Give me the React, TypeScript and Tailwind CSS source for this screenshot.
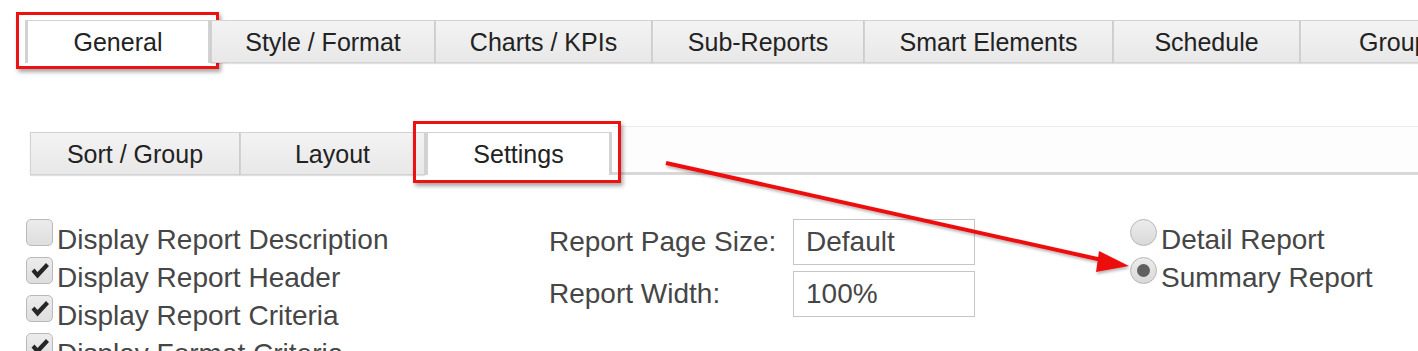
import React from "react"

const topTabs = [
  { label: "General", w: "w-[186px]", active: true },
  { label: "Style / Format", w: "w-[224px]" },
  { label: "Charts / KPIs", w: "w-[217px]" },
  { label: "Sub-Reports", w: "w-[212px]" },
  { label: "Smart Elements", w: "w-[249px]" },
  { label: "Schedule", w: "w-[187px]" },
  { label: "Groups", w: "w-[200px]" },
]

const subTabs = [
  { label: "Sort / Group", w: "w-[210px]" },
  { label: "Layout", w: "w-[185px]" },
  { label: "Settings", w: "w-[187px]", active: true },
]

const checks = [
  { label: "Display Report Description", on: false },
  { label: "Display Report Header", on: true },
  { label: "Display Report Criteria", on: true },
  { label: "Display Format Criteria", on: true },
]

function RedBox({ className }: { className: string }) {
  return (
    <div
      className={`pointer-events-none absolute border-[3px] border-[#ee1111] shadow-[2px_3px_4px_rgba(0,0,0,0.35)] ${className}`}
    />
  )
}

function Tab({ label, w, active, big }: { label: string; w: string; active?: boolean; big?: boolean }) {
  return (
    <div
      className={`relative flex h-[43px] shrink-0 items-center justify-center border border-[#d2d2d2] pt-[2px] text-[25px] text-[#222] ${w} ${
        active
          ? "border-x-[3px] border-b-0 bg-white"
          : "bg-gradient-to-b from-[#f3f3f3] to-[#e8e8e8] shadow-[0_1px_1px_rgba(0,0,0,0.12)]"
      }`}
    >
      {label}
      {active && big && <RedBox className="-left-[12px] -top-[9px] -right-[11px] -bottom-[6px]" />}
      {active && !big && <RedBox className="-left-[15px] -top-[12px] -right-[12px] -bottom-[8px]" />}
    </div>
  )
}

function CheckBox({ on }: { on: boolean }) {
  return (
    <div className="mr-[4px] flex h-[27px] w-[27px] shrink-0 items-center justify-center rounded-[5px] border border-[#b9b9b9] bg-gradient-to-b from-[#ececec] to-[#dedede]">
      {on && (
        <svg width="20" height="18" viewBox="0 0 20 18">
          <path d="M1.5 9.5 L4.5 6.5 L7.5 10 L16 1 L19 4 L7.5 16.5 Z" fill="#262626" strokeLinejoin="round" />
        </svg>
      )}
    </div>
  )
}

function Radio({ on }: { on: boolean }) {
  return (
    <div className="mr-[4px] flex h-[27px] w-[27px] shrink-0 items-center justify-center rounded-full border border-[#b5b5b5] bg-gradient-to-b from-[#ececec] to-[#d9d9d9]">
      {on && <div className="h-[13px] w-[13px] rounded-full bg-[#606060]" />}
    </div>
  )
}

export default function App() {
  return (
    <div className="relative h-[351px] w-[1418px] overflow-hidden bg-white font-['Liberation_Sans',Arial,sans-serif]">
      {/* main tabs */}
      <div className="flex pl-[25px] pt-[20px]">
        {topTabs.map((t) => (
          <Tab key={t.label} {...t} big />
        ))}
      </div>

      {/* sub tabs */}
      <div className="mt-[63px] flex items-end pl-[30px]">
        {subTabs.map((t) => (
          <Tab key={t.label} {...t} />
        ))}
        <div className="h-[49px] flex-1 border-b-[3px] border-t border-b-[#d8d8d8] border-t-[#ececec] bg-[#fdfdfd]" />
      </div>

      {/* settings body */}
      <div className="mt-[44px] flex pl-[26px] text-[28px] text-[#464646]">
        <div className="w-[523px]">
          {checks.map((c) => (
            <div key={c.label} className="flex h-[38px] items-start">
              <CheckBox on={c.on} />
              <span className="mt-[2px] leading-[38px]">{c.label}</span>
            </div>
          ))}
        </div>

        <div className="flex w-[581px] flex-col gap-[6px]">
          {[
            ["Report Page Size:", "Default"],
            ["Report Width:", "100%"],
          ].map(([label, value]) => (
            <div key={label} className="flex items-center">
              <span className="w-[244px]">{label}</span>
              <div className="flex h-[46px] w-[182px] items-center border border-[#c6c6c6] pl-[12px]">{value}</div>
            </div>
          ))}
        </div>

        <div>
          {[
            ["Detail Report", false],
            ["Summary Report", true],
          ].map(([label, on]) => (
            <div key={label as string} className="flex h-[38px] items-start">
              <Radio on={on as boolean} />
              <span className="mt-[2px] leading-[38px]">{label as string}</span>
            </div>
          ))}
        </div>
      </div>

      {/* annotation arrow */}
      <svg className="pointer-events-none absolute left-0 top-0" width="1418" height="351">
        <defs>
          <filter id="sh" x="-10%" y="-10%" width="120%" height="130%">
            <feDropShadow dx="1" dy="2" stdDeviation="1.5" floodColor="#000" floodOpacity="0.3" />
          </filter>
        </defs>
        <g filter="url(#sh)">
          <line x1="666" y1="163" x2="1102" y2="260" stroke="#ee1111" strokeWidth="4" />
          <polygon points="1099,251 1129,266 1096,272" fill="#ee1111" />
        </g>
      </svg>
    </div>
  )
}
